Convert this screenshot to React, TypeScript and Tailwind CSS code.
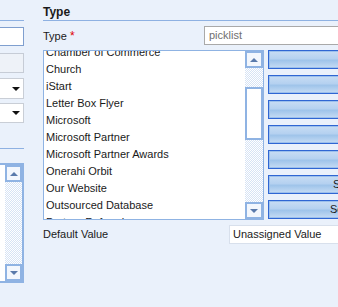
import React from "react";

const items = [
  "Chamber of Commerce",
  "Church",
  "iStart",
  "Letter Box Flyer",
  "Microsoft",
  "Microsoft Partner",
  "Microsoft Partner Awards",
  "Onerahi Orbit",
  "Our Website",
  "Outsourced Database",
  "Partner Referral",
];

function UpArrow() {
  return <div className="w-0 h-0 border-x-[4px] border-x-transparent border-b-[4px] border-b-[#5a7aab]" />;
}
function DownArrow({ color = "#5a7aab" }: { color?: string }) {
  return (
    <div
      className="w-0 h-0 border-x-[4px] border-x-transparent border-t-[4px]"
      style={{ borderTopColor: color }}
    />
  );
}

function ScrollBtn({ up }: { up?: boolean }) {
  return (
    <div className="h-[17px] w-full shrink-0 bg-[#f3f7fd] border-2 border-[#8fb3e3] flex items-center justify-center">
      {up ? <UpArrow /> : <DownArrow />}
    </div>
  );
}

function Btn({ label, pad }: { label?: string; pad?: string }) {
  return (
    <div className="h-[19px] w-[120px] overflow-hidden whitespace-nowrap border border-[#2f66d3] shadow-[inset_0_0_0_1px_#9cc0ec] bg-[linear-gradient(#c8ddf4_0%,#b5d1f0_45%,#9fc4ea_55%,#c6dcf4_100%)] flex items-center">
      {label ? <span className={pad}>{label}</span> : null}
    </div>
  );
}

export default function App() {
  return (
    <div className="w-[338px] h-[307px] overflow-hidden bg-[#eaf1fb] font-['Liberation_Sans',Arial,sans-serif] text-[11px] text-[#1a1a1a] flex">
      {/* left column */}
      <div className="w-[24px] shrink-0">
        <div className="-ml-[20px] w-[44px] flex flex-col">
          <div className="h-[21px] border-b border-[#8eb1e2]" />
          <div className="mt-[6px] h-[19px] bg-white border border-[#7f9fcf]" />
          <div className="mt-[7px] h-[20px] bg-[#eef2f8] border border-[#c6ccd6]" />
          <div className="mt-[5px] h-[21px] bg-white border border-[#c9ced6] flex items-center pl-[31px]">
            <DownArrow color="#111" />
          </div>
          <div className="mt-[4px] h-[20px] bg-white border border-[#c9ced6] flex items-center pl-[31px]">
            <DownArrow color="#111" />
          </div>
          <div className="mt-[25px] border-t border-[#8eb1e2]" />
          <div className="mt-[14px] h-[120px] bg-white border-2 border-[#8fb3e3] flex">
            <div className="flex-1" />
            <div className="w-[17px] flex flex-col bg-[repeating-conic-gradient(#d6e3f5_0_25%,#ffffff_0_50%)] bg-[length:2px_2px]">
              <ScrollBtn up />
              <div className="flex-1" />
              <ScrollBtn />
            </div>
          </div>
        </div>
      </div>

      {/* main column */}
      <div className="ml-[19px] flex-1 flex flex-col min-w-0">
        <div className="h-[21px] border-b border-[#8eb1e2] pt-[5px] text-[12px] font-bold leading-[14px] -mr-[10px]">
          Type
        </div>
        <div className="mt-[5px] h-[19px] flex items-center">
          <div className="w-[161px] shrink-0">
            Type <span className="text-[#e00000] text-[12px]">*</span>
          </div>
          <div className="flex-1 h-full -mr-[10px] bg-white border border-[#a9a9a9] flex items-center pl-[4px] text-[#707070]">
            picklist
          </div>
        </div>
        <div className="mt-[5px] flex">
          <div className="w-[221px] h-[170px] shrink-0 bg-white border border-[#8fb3e3] flex overflow-hidden">
            <div className="flex-1 overflow-hidden">
              <div className="-mt-[7px]">
                {items.map((t) => (
                  <div key={t} className="h-[17px] leading-[17px] pl-[2px] whitespace-nowrap">
                    {t}
                  </div>
                ))}
              </div>
            </div>
            <div className="w-[18px] shrink-0 flex flex-col bg-[repeating-conic-gradient(#d6e3f5_0_25%,#ffffff_0_50%)] bg-[length:2px_2px]">
              <ScrollBtn up />
              <div className="h-[19px]" />
              <div className="h-[53px] bg-white border-2 border-[#8fb3e3]" />
              <div className="flex-1" />
              <ScrollBtn />
            </div>
          </div>
          <div className="ml-[4px] flex flex-col gap-[6px]">
            <Btn />
            <Btn />
            <Btn />
            <Btn />
            <Btn />
            <Btn label="Sort" pad="pl-[64px]" />
            <Btn label="Set as Default" pad="pl-[61px]" />
          </div>
        </div>
        <div className="mt-[5px] h-[19px] flex items-center">
          <div className="w-[186px] shrink-0">Default Value</div>
          <div className="flex-1 h-full -mr-[10px] bg-white border border-[#d8e0ec] flex items-center pl-[3px] whitespace-nowrap">
            Unassigned Value
          </div>
        </div>
      </div>
    </div>
  );
}
